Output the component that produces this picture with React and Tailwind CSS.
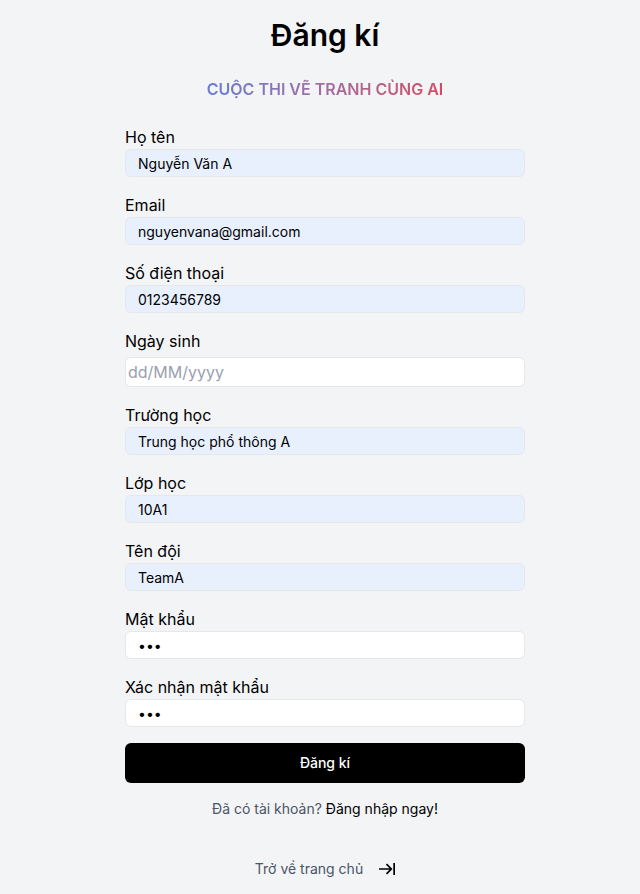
import { useState } from "react";

const filled = "bg-[#e8f0fe]";
const blank = "bg-white";

const beforeDate = [
  { id: "name", label: "Họ tên", type: "text", value: "Nguyễn Văn A", tone: filled },
  { id: "email", label: "Email", type: "email", value: "nguyenvana@gmail.com", tone: filled },
  { id: "phone", label: "Số điện thoại", type: "tel", value: "0123456789", tone: filled },
];

const afterDate = [
  { id: "school", label: "Trường học", type: "text", value: "Trung học phổ thông A", tone: filled },
  { id: "grade", label: "Lớp học", type: "text", value: "10A1", tone: filled },
  { id: "team", label: "Tên đội", type: "text", value: "TeamA", tone: filled },
  { id: "password", label: "Mật khẩu", type: "password", value: "123", tone: blank },
  { id: "confirm", label: "Xác nhận mật khẩu", type: "password", value: "123", tone: blank },
];

function Field({ id, label, type, value, tone }) {
  const [text, setText] = useState(value);
  return (
    <div className="flex flex-col">
      <label htmlFor={id} className="text-base">{label}</label>
      <input
        id={id}
        type={type}
        value={text}
        onChange={(e) => setText(e.target.value)}
        className={`h-7 w-full rounded-md border border-gray-200 px-3 text-sm ${tone}`}
      />
    </div>
  );
}

function ArrowToBar() {
  return (
    <svg viewBox="0 0 16 12" className="h-3 w-4" fill="none" stroke="currentColor" strokeWidth="1.7" aria-hidden="true">
      <path d="M0 6H12M7.5 1.2L12.3 6L7.5 10.8M15.15 0V12" />
    </svg>
  );
}

export default function App() {
  return (
    <main className="min-h-screen bg-gray-100 pt-4 pb-[15px] pl-[10px] font-['Inter',sans-serif] text-black">
      <div className="mx-auto flex w-full max-w-[400px] flex-col">
        <h1 className="text-center text-3xl leading-[38px] font-semibold">Đăng kí</h1>
        <div className="mt-[23px] flex justify-center">
          <h2 className="bg-linear-to-r from-[#667bd8] to-[#d24c62] bg-clip-text text-base font-semibold text-transparent">
            CUỘC THI VẼ TRANH CÙNG AI
          </h2>
        </div>
        <form className="mt-6 flex flex-col gap-4" onSubmit={(e) => e.preventDefault()}>
          {beforeDate.map((f) => <Field key={f.id} {...f} />)}
          <div className="flex flex-col gap-1">
            <label htmlFor="birthday" className="text-base">Ngày sinh</label>
            <input
              id="birthday"
              type="text"
              placeholder="dd/MM/yyyy"
              className="h-[30px] w-full rounded-md border border-gray-200 bg-white px-0.5 text-base placeholder:text-gray-400"
            />
          </div>
          {afterDate.map((f) => <Field key={f.id} {...f} />)}
          <button type="submit" className="h-10 w-full rounded-md bg-black text-sm font-medium text-white">
            Đăng kí
          </button>
        </form>
        <p className="mt-4 text-center text-sm text-gray-600">
          Đã có tài khoản? <a href="#login" className="text-black">Đăng nhập ngay!</a>
        </p>
        <a href="#home" className="mt-10 flex items-center justify-center gap-4 text-sm text-gray-600">
          Trở về trang chủ
          <span className="text-black"><ArrowToBar /></span>
        </a>
      </div>
    </main>
  );
}
